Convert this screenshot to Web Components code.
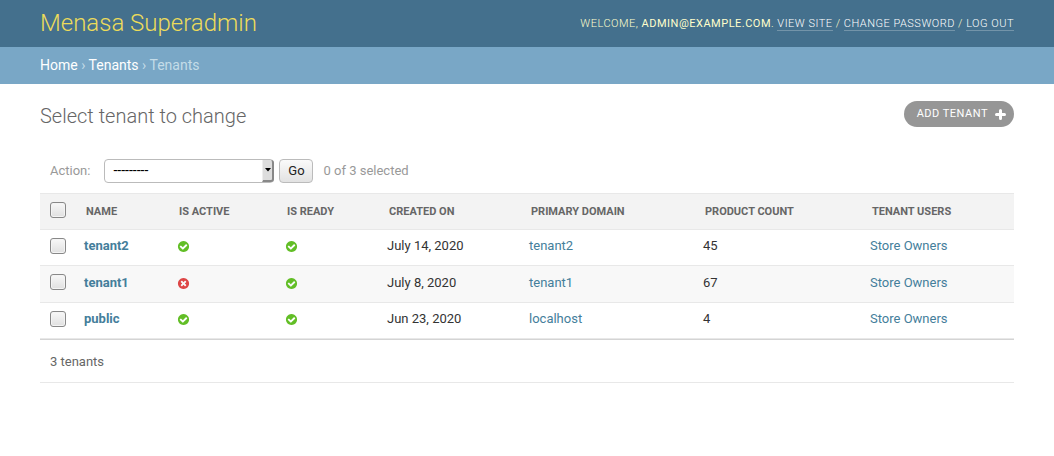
<!DOCTYPE html>
<html lang="en">
<head>
<meta charset="utf-8">
<meta name="viewport" content="width=device-width, initial-scale=1">
<title>Select tenant to change | Menasa Superadmin</title>
<style>
  body { margin: 0; background: #fff; color: #333; font: 13px/20px Roboto, "Liberation Sans", sans-serif; }
</style>
</head>
<body>
<admin-header>
  <span slot="brand">Menasa Superadmin</span>
  <span slot="user">admin@example.com</span>
</admin-header>
<admin-breadcrumbs trail="Home,Tenants">Tenants</admin-breadcrumbs>
<admin-content>
  <span slot="title">Select tenant to change</span>
  <add-link slot="tools">Add tenant</add-link>
  <action-bar>0 of 3 selected</action-bar>
  <result-list></result-list>
  <result-footer>3 tenants</result-footer>
</admin-content>

<script>
const define = (name, markup, setup) => {
  const template = document.createElement('template');
  template.innerHTML = markup;
  customElements.define(name, class extends HTMLElement {
    constructor() {
      super();
      this.attachShadow({ mode: 'open' }).append(template.content.cloneNode(true));
    }
    connectedCallback() { if (setup) setup(this, this.shadowRoot); }
  });
};

define('admin-header', `
  <style>
    :host { display: flex; justify-content: space-between; align-items: center; height: 47px; padding: 0 40px; background: #44708d; color: #ffc; }
    h1 { margin: 0; padding-bottom: 2px; font-size: 24px; line-height: 28px; font-weight: 300; }
    h1 a { color: #eddc5a; text-decoration: none; }
    nav { font-size: 11px; line-height: 14px; font-weight: 300; letter-spacing: 0.5px; text-transform: uppercase; }
    strong { font-weight: 400; }
    nav a { color: #fff; text-decoration: none; border-bottom: 1px solid rgba(255,255,255,.25); }
  </style>
  <h1><a href="#"><slot name="brand"></slot></a></h1>
  <nav>Welcome, <strong><slot name="user"></slot></strong>. <a href="#">View site</a> / <a href="#">Change password</a> / <a href="#">Log out</a></nav>`);

define('admin-breadcrumbs', `
  <style>
    :host { display: block; padding: 8px 40px 9px; background: #79a7c6; color: #c4dce8; font-size: 14px; line-height: 20px; }
    a { color: #fff; text-decoration: none; }
  </style>
  <nav aria-label="Breadcrumbs"><span id="trail"></span><slot></slot></nav>`,
  (host, root) => {
    root.querySelector('#trail').innerHTML =
      host.getAttribute('trail').split(',').map(t => `<a href="#">${t}</a> › `).join('');
  });

define('admin-content', `
  <style>
    :host { display: block; padding: 17px 40px 40px; }
    header { display: flex; justify-content: space-between; align-items: flex-start; margin-bottom: 21px; }
    h2 { margin: 0; padding-top: 3px; font-size: 20px; line-height: 24px; font-weight: 300; color: #666; }
  </style>
  <main><header><h2><slot name="title"></slot></h2><slot name="tools"></slot></header><slot></slot></main>`);

define('add-link', `
  <style>
    :host { display: block; }
    a { display: flex; align-items: center; gap: 7px; height: 26px; padding: 0 8px 0 13px; border-radius: 13px; background: #969696; color: #fff; font-size: 11px; letter-spacing: 0.5px; text-transform: uppercase; text-decoration: none; }
  </style>
  <a href="#"><slot></slot><svg width="11" height="11" viewBox="0 0 11 11" aria-hidden="true"><path d="M5.5 1.5v8M1.5 5.5h8" stroke="#fff" stroke-width="3" stroke-linecap="round"/></svg></a>`);

define('action-bar', `
  <style>
    :host { display: flex; align-items: center; height: 44px; padding: 0 10px; color: #999; }
    label { margin-right: 14px; }
    .pick { display: grid; grid-template-columns: 1fr 12px; width: 170px; height: 24px; margin-right: 5px; }
    select { grid-area: 1 / 1 / 2 / 3; appearance: none; box-sizing: border-box; margin: 0; padding: 0 16px 2px 8px; border: 1px solid #bbb; border-radius: 4px; background: #fff; color: #000; font: 14px/20px Roboto, sans-serif; }
    .arrow { grid-area: 1 / 2; display: grid; place-items: center; box-sizing: border-box; margin: 1px 0; background: #ddd; border: solid #888; border-width: 0 2px 2px 0; border-left: 1px solid #eee; border-radius: 0 3px 3px 0; pointer-events: none; }
    button { box-sizing: border-box; width: 34px; height: 24px; margin: 0 10px 0 0; padding: 0; border: 1px solid #bbb; border-radius: 4px; background: linear-gradient(#fafafa, #e2e2e2); color: #222; font: inherit; }
  </style>
  <label for="action">Action:</label>
  <div class="pick"><select id="action"><option>---------</option></select><span class="arrow"><svg width="6" height="4" viewBox="0 0 6 4" aria-hidden="true"><path d="M0 0h6L3 3.5z" fill="#000"/></svg></span></div>
  <button type="button">Go</button><span><slot></slot></span>`);

define('status-icon', `
  <style>:host { display: block; } svg { display: block; }</style>
  <svg width="13" height="13" viewBox="0 0 1792 1792" role="img"><path/></svg>`,
  (host, root) => {
    const on = host.hasAttribute('on');
    root.querySelector('svg').setAttribute('aria-label', on ? 'True' : 'False');
    const path = root.querySelector('path');
    path.setAttribute('fill', on ? '#62be26' : '#dd4646');
    path.setAttribute('d', on
      ? 'M1412 734q0-28-18-46l-91-90q-19-19-45-19t-45 19l-408 407-226-226q-19-19-45-19t-45 19l-91 90q-18 18-18 46 0 27 18 45l362 362q19 19 45 19 27 0 46-19l543-543q18-18 18-45zm252 162q0 209-103 385.500t-279.500 279.500-385.500 103-385.500-103-279.500-279.500-103-385.500 103-385.500 279.500-279.500 385.500-103 385.500 103 279.500 279.500 103 385.500z'
      : 'M1277 1122q0-26-19-45l-181-181 181-181q19-19 19-45 0-27-19-46l-90-90q-19-19-46-19-26 0-45 19l-181 181-181-181q-19-19-45-19-27 0-46 19l-90 90q-19 19-19 46 0 26 19 45l181 181-181 181q-19 19-19 45 0 27 19 46l90 90q19 19 46 19 26 0 45-19l181-181 181 181q19 19 45 19 27 0 46-19l90-90q19-19 19-46zm387-226q0 209-103 385.500t-279.500 279.500-385.500 103-385.500-103-279.500-279.500-103-385.500 103-385.500 279.500-279.500 385.500-103 385.500 103 279.500 279.500 103 385.500z');
  });

define('check-box', `
  <style>
    :host { display: block; }
    input { appearance: none; display: block; box-sizing: border-box; width: 16px; height: 16px; margin: 0; border: 1px solid #888; border-radius: 3px; background: linear-gradient(#f8f8f8, #e0e0e0); box-shadow: inset 0 0 0 1px #f4f4f4; }
    input:checked { background: #79a7c6; }
  </style>
  <input type="checkbox">`,
  (host, root) => root.querySelector('input').setAttribute('aria-label', host.getAttribute('label')));

define('result-list', `
  <style>
    :host { display: block; }
    table { width: 100%; table-layout: fixed; border-collapse: separate; border-spacing: 0; }
    .c0 { width: 36px } .c1 { width: 93px } .c2 { width: 108px } .c3 { width: 102px }
    .c4 { width: 142px } .c5 { width: 174px } .c6 { width: 167px } .c7 { width: 152px }
    th, td { box-sizing: border-box; padding: 0 8px; border-bottom: 1px solid #e8e8e8; text-align: left; white-space: nowrap; vertical-align: middle; }
    thead th { height: 37px; padding: 0 10px; border-top: 1px solid #e8e8e8; background: #f3f3f3; color: #666; font-size: 11px; line-height: 16px; font-weight: 700; text-transform: uppercase; }
    tbody th, tbody td { height: 36px; padding-bottom: 4px; }
    tbody tr:nth-child(even) > * { height: 37px; padding-bottom: 2px; background: #f8f8f8; }
    tr > :first-child, tbody tr:nth-child(even) > :first-child { padding: 0 10px 4px; }
    tbody td:has(status-icon) { padding-bottom: 2px; }
    a { color: #447e9b; text-decoration: none; }
  </style>
  <table>
    <colgroup><col class="c0"><col class="c1"><col class="c2"><col class="c3"><col class="c4"><col class="c5"><col class="c6"><col class="c7"></colgroup>
    <thead><tr><th scope="col"><check-box label="Select all tenants"></check-box></th><th scope="col">Name</th><th scope="col">Is active</th><th scope="col">Is ready</th><th scope="col">Created on</th><th scope="col">Primary domain</th><th scope="col">Product count</th><th scope="col">Tenant users</th></tr></thead>
    <tbody></tbody>
  </table>`,
  (host, root) => {
    const rows = [
      ['tenant2', true, true, 'July 14, 2020', 'tenant2', 45],
      ['tenant1', false, true, 'July 8, 2020', 'tenant1', 67],
      ['public', true, true, 'Jun 23, 2020', 'localhost', 4],
    ];
    const icon = on => `<td><status-icon ${on ? 'on' : ''}></status-icon></td>`;
    root.querySelector('tbody').innerHTML = rows.map(([name, active, ready, date, domain, count]) =>
      `<tr><td><check-box label="Select ${name}"></check-box></td><th scope="row"><a href="#">${name}</a></th>${icon(active)}${icon(ready)}<td>${date}</td><td><a href="#">${domain}</a></td><td>${count}</td><td><a href="#">Store Owners</a></td></tr>`).join('');
  });

define('result-footer', `
  <style>:host { display: block; padding: 12px 10px 10px; border-top: 1px solid #d4d4d4; border-bottom: 1px solid #e8e8e8; color: #666; }</style>
  <slot></slot>`);
</script>
</body>
</html>
